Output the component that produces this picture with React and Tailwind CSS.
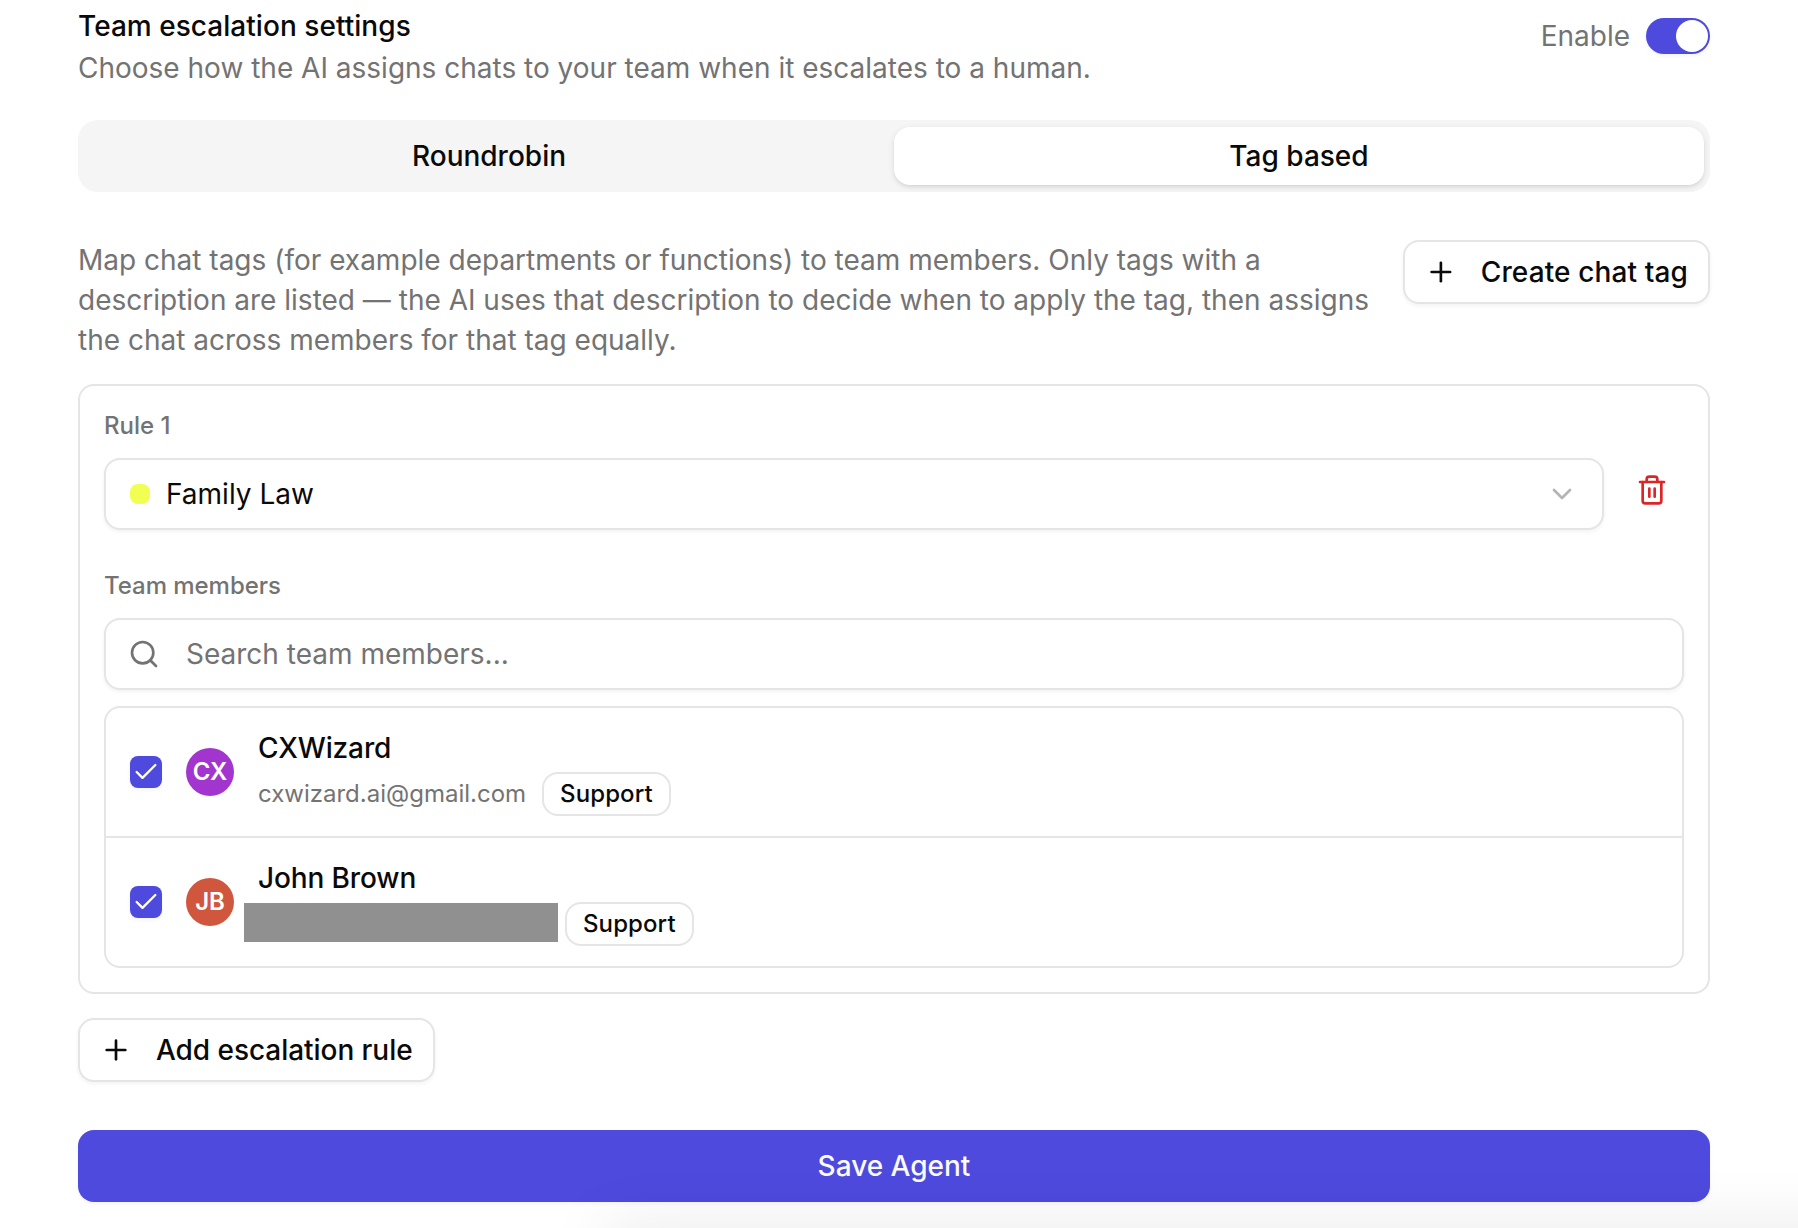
import React, { useState } from "react";
import { Check, ChevronDown, Plus, Search, Trash2 } from "lucide-react";

const members = [
  {
    id: 1,
    name: "CXWizard",
    initials: "CX",
    email: "cxwizard.ai@gmail.com",
    avatarClass: "bg-[#a335cf]",
    tag: "Support",
  },
  {
    id: 2,
    name: "John Brown",
    initials: "JB",
    email: "",
    avatarClass: "bg-[#d0563d]",
    tag: "Support",
  },
];

const outlineButton =
  "flex h-16 shrink-0 items-center gap-6 rounded-[16px] border-2 border-[#e5e5e5] bg-white px-5 font-medium whitespace-nowrap shadow-[0_2px_4px_rgba(0,0,0,0.05)]";
const fieldClass =
  "flex h-[72px] items-center rounded-[16px] border-2 border-[#e5e5e5] bg-white px-6 shadow-[0_2px_4px_rgba(0,0,0,0.05)]";

const Tab = ({ label, active, onClick }) => (
  <button
    onClick={onClick}
    className={
      active
        ? "h-[58px] flex-1 rounded-[16px] bg-white font-medium shadow-[0_2px_6px_rgba(0,0,0,0.1),0_2px_4px_-2px_rgba(0,0,0,0.1)]"
        : "h-[58px] flex-1 rounded-[16px] font-medium"
    }
  >
    {label}
  </button>
);

const MemberRow = ({ member, checked, onToggle }) => (
  <div className="flex items-center px-6 py-5">
    <button
      onClick={onToggle}
      className={
        checked
          ? "flex size-8 items-center justify-center rounded-[8px] bg-[#4d4add] text-white shadow-[0_2px_4px_rgba(0,0,0,0.05)]"
          : "size-8 rounded-[8px] border-2 border-[#e5e5e5]"
      }
    >
      {checked && <Check className="size-7" strokeWidth={2} />}
    </button>
    <div
      className={`ml-6 flex size-12 items-center justify-center rounded-full text-[24px] font-semibold text-white ${member.avatarClass}`}
    >
      {member.initials}
    </div>
    <div className="ml-6 flex flex-col gap-1">
      <p className="font-medium leading-[40px] tracking-[-0.12px]">{member.name}</p>
      <div className="flex h-11 items-center text-[24px] leading-[32px]">
        {member.email ? (
          <span className="mr-4 text-[#737373]">{member.email}</span>
        ) : (
          <span className="-ml-3.5 mr-[7px] mt-[-3px] h-[39px] w-[314px] bg-[#909090]" />
        )}
        <span className="flex h-11 w-[129px] items-center rounded-[16px] border-2 border-[#e5e5e5] px-4 font-medium tracking-[0.1px]">
          {member.tag}
        </span>
      </div>
    </div>
  </div>
);

const App = () => {
  const [enabled, setEnabled] = useState(true);
  const [mode, setMode] = useState("tag");
  const [search, setSearch] = useState("");
  const [selected, setSelected] = useState([1, 2]);

  const toggleMember = (id) => {
    setSelected((prev) =>
      prev.includes(id) ? prev.filter((m) => m !== id) : [...prev, id]
    );
  };

  return (
    <div className="relative h-[1228px] w-[1798px] overflow-hidden bg-white pl-[78px] pr-[88px] pt-3 font-['Inter',sans-serif] text-[28px] leading-[40px] text-[#0a0a0a]">
      <div className="flex items-start justify-between">
        <div className="flex flex-col gap-2">
          <h2 className="font-medium leading-[28px] tracking-[0.04px]">Team escalation settings</h2>
          <p className="text-[#737373]">
            Choose how the AI assigns chats to your team when it escalates to a human.
          </p>
        </div>
        <div className="mt-1 flex items-center gap-4">
          <span className="text-[#737373]">Enable</span>
          <button
            onClick={() => setEnabled(!enabled)}
            className={
              enabled
                ? "flex h-9 w-16 items-center justify-end rounded-full bg-[#4d4add] p-0.5 shadow-[0_2px_4px_rgba(0,0,0,0.05)]"
                : "flex h-9 w-16 items-center rounded-full bg-[#e5e5e5] p-0.5"
            }
          >
            <span className="size-8 rounded-full bg-white" />
          </button>
        </div>
      </div>

      <div className="mt-8 flex h-[72px] items-center rounded-[20px] bg-[#f5f5f5] px-1.5">
        <Tab label="Roundrobin" active={mode === "roundrobin"} onClick={() => setMode("roundrobin")} />
        <Tab label="Tag based" active={mode === "tag"} onClick={() => setMode("tag")} />
      </div>

      <div className="mt-12 flex items-start justify-between gap-6">
        <p className="text-[#737373]">
          Map chat tags (for example departments or functions) to team members. Only tags with a
          description are listed — the AI uses that description to decide when to apply the tag, then
          assigns the chat across members for that tag equally.
        </p>
        <button className={`${outlineButton} w-[307px] tracking-[0.12px]`}>
          <Plus className="size-8" />
          Create chat tag
        </button>
      </div>

      <div className="mt-6 rounded-[16px] border-2 border-[#e5e5e5] p-6">
        <p className="text-[24px] font-medium leading-[32px] text-[#737373]">Rule 1</p>
        <div className="mt-4 flex gap-4">
          <div className={`${fieldClass} flex-1`}>
            <span className="size-5 rounded-[8px] bg-[#f0ff52]" />
            <span className="ml-4 flex-1">Family Law</span>
            <ChevronDown className="size-8 text-[#0a0a0a] opacity-30" />
          </div>
          <button className="flex size-16 items-center justify-center text-[#dc2626]">
            <Trash2 className="size-8" />
          </button>
        </div>

        <p className="mt-10 text-[24px] font-medium leading-[32px] tracking-[-0.04px] text-[#737373]">
          Team members
        </p>
        <div className={`${fieldClass} mt-4`}>
          <Search className="-ml-0.5 size-8 text-[#737373]" />
          <input
            value={search}
            onChange={(e) => setSearch(e.target.value)}
            placeholder="Search team members..."
            className="ml-[26px] flex-1 outline-none placeholder:text-[#737373]"
          />
        </div>

        <div className="mt-4 divide-y-2 divide-[#e5e5e5] rounded-[16px] border-2 border-[#e5e5e5]">
          {members.map((member) => (
            <MemberRow
              key={member.id}
              member={member}
              checked={selected.includes(member.id)}
              onToggle={() => toggleMember(member.id)}
            />
          ))}
        </div>
      </div>

      <button className={`${outlineButton} mt-6 w-[357px] tracking-[-0.05px]`}>
        <Plus className="size-8" />
        Add escalation rule
      </button>

      <button className="mt-12 h-[72px] w-full rounded-[16px] bg-[#4d4add] font-medium text-[#fafafa] shadow-[0_2px_4px_rgba(0,0,0,0.05)]">
        Save Agent
      </button>

      <div className="pointer-events-none absolute -bottom-10 left-[605px] h-10 w-[1300px] shadow-[0_0_64px_rgba(0,0,0,0.1)]" />
    </div>
  );
};

export default App;
